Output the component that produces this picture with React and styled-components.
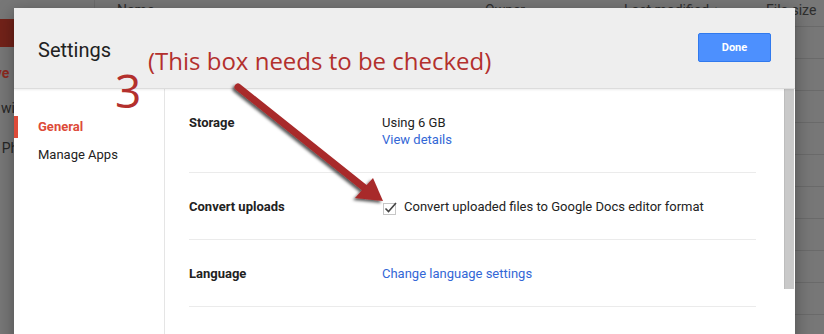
import React from "react";
import styled, { createGlobalStyle } from "styled-components";

const GlobalStyle = createGlobalStyle`
  html, body {
    margin: 0;
    padding: 0;
  }
  body {
    font-family: Roboto, "Liberation Sans", Arial, sans-serif;
    overflow: hidden;
  }
`;

const Page = styled.div`
  position: relative;
  width: 824px;
  height: 334px;
  overflow: hidden;
  background: #777777;
  display: flex;
`;

/* dimmed drive page behind the dialog */
const DriveNav = styled.div`
  flex-shrink: 0;
  width: 155px;
  margin-left: -60px;
  padding-top: 19px;
  box-sizing: border-box;
  border-right: 1px solid #6c6c6c;
`;

const NewButton = styled.div`
  margin-left: 14px;
  width: 88px;
  height: 28px;
  border-radius: 2px;
  background: #722219;
`;

const NavItem = styled.div`
  margin-top: ${props => props.gap}px;
  padding-left: 14px;
  font-size: 14px;
  line-height: 18px;
  white-space: nowrap;
  color: ${props => (props.active ? "#8c2a1f" : "#262626")};
  font-weight: ${props => (props.active ? 700 : 400)};
`;

const FileList = styled.div`
  flex: 1;
  display: flex;
  flex-direction: column;
`;

const ListHeader = styled.div`
  display: grid;
  grid-template-columns: 368px 139px 142px 1fr;
  height: 27px;
  padding: 1px 0 0 22px;
  box-sizing: border-box;
  border-bottom: 1px solid #6a6a6a;
  font-size: 14px;
  line-height: 18px;
  color: #2e2e2e;
  white-space: nowrap;
`;

const ListRow = styled.div`
  height: 31px;
  border-bottom: 1px solid #6a6a6a;
`;

/* settings dialog */
const Dialog = styled.div`
  position: absolute;
  left: 14px;
  top: 8px;
  z-index: 1;
  width: 781px;
  height: 420px;
  display: flex;
  flex-direction: column;
  background: #ffffff;
  box-shadow: 0 4px 16px rgba(0, 0, 0, 0.35);
`;

const Header = styled.div`
  flex-shrink: 0;
  height: 80px;
  display: flex;
  align-items: center;
  justify-content: space-between;
  padding: 0 24px;
  background: #eeeeee;
  border-bottom: 1px solid #dcdcdc;
  box-shadow: 0 1px 2px rgba(0, 0, 0, 0.08);
  position: relative;
`;

const Title = styled.h2`
  margin: 3px 0 0;
  font-size: 20px;
  font-weight: 400;
  color: #212121;
`;

const DoneButton = styled.button`
  width: 73px;
  height: 29px;
  margin-bottom: 2px;
  border: 1px solid #3079ed;
  border-radius: 2px;
  background: #4d90fe;
  color: #ffffff;
  font-family: Roboto, "Liberation Sans", Arial, sans-serif;
  font-size: 11px;
  font-weight: 700;
`;

const Body = styled.div`
  flex: 1;
  display: flex;
`;

const Sidebar = styled.nav`
  width: 150px;
  flex-shrink: 0;
  padding-top: 27px;
  border-right: 1px solid #e5e5e5;
`;

const SideItem = styled.div`
  margin-bottom: 6px;
  padding-left: ${props => (props.active ? 20 : 24)}px;
  border-left: ${props => (props.active ? "4px solid #dd4b39" : "none")};
  font-size: 13px;
  line-height: 22px;
  font-weight: ${props => (props.active ? 700 : 400)};
  color: ${props => (props.active ? "#dd4b39" : "#222222")};
`;

const Content = styled.div`
  flex: 1;
  padding: 0 28px 0 24px;
`;

const Row = styled.div`
  display: grid;
  grid-template-columns: 193px 1fr;
  padding: 25px 0 24px;
  border-bottom: 1px solid #ebebeb;
  font-size: 13px;
  line-height: 17px;
  color: #222222;
`;

const Label = styled.div`
  font-weight: 700;
`;

const Value = styled.div`
  display: flex;
  flex-direction: ${props => (props.inline ? "row" : "column")};
  align-items: ${props => (props.inline ? "center" : "flex-start")};
  gap: ${props => (props.inline ? "7px" : "0")};
`;

const LinkText = styled.a`
  color: #3367d6;
  text-decoration: none;
`;

const ScrollTrack = styled.div`
  width: 10px;
  margin-right: 1px;
  flex-shrink: 0;
`;

const ScrollThumb = styled.div`
  height: 200px;
  background: #c9c9c9;
  border-left: 1px solid #bdbdbd;
  box-sizing: border-box;
`;

/* annotation layer, drawn over the dialog */
const Note = styled.div`
  position: absolute;
  z-index: 2;
  left: 148px;
  top: 49px;
  font-family: "Open Sans", "DejaVu Sans", sans-serif;
  font-size: 24px;
  line-height: 1;
  color: #b3302d;
  white-space: nowrap;
`;

const StepNumber = styled.div`
  position: absolute;
  z-index: 2;
  left: 115px;
  top: 67px;
  font-family: "Open Sans", "DejaVu Sans", sans-serif;
  font-size: 46px;
  line-height: 1;
  color: #b3302d;
`;

const ArrowLayer = styled.svg`
  position: absolute;
  z-index: 2;
  left: 0;
  top: 0;
  pointer-events: none;
`;

const CheckIcon = () => (
  <svg width="15" height="16" viewBox="0 0 15 16">
    <rect x="1.5" y="4.5" width="12" height="11" fill="#fff" stroke="#c6c6c6" />
    <path d="M3.5 9.5 L6.5 12.5 L14 4" fill="none" stroke="#444" strokeWidth="1.6" />
  </svg>
);

const Arrow = () => (
  <ArrowLayer width="824" height="334" viewBox="0 0 824 334">
    <defs>
      <filter id="arrowShadow" x="-20%" y="-20%" width="140%" height="140%">
        <feDropShadow dx="-2" dy="2" stdDeviation="1.6" floodColor="#000" floodOpacity="0.65" />
      </filter>
    </defs>
    <g filter="url(#arrowShadow)" fill="#a8292a">
      <line x1="238" y1="87" x2="366" y2="189" stroke="#a8292a" strokeWidth="7" strokeLinecap="round" />
      <polygon points="373,178 383,201 355,198" />
    </g>
  </ArrowLayer>
);

const App = () => (
  <>
    <GlobalStyle />
    <Page>
      <DriveNav>
        <NewButton />
        <NavItem gap={17} active>
          My Drive
        </NavItem>
        <NavItem gap={17}>Shared with me</NavItem>
        <NavItem gap={22}>Google Photos</NavItem>
      </DriveNav>
      <FileList>
        <ListHeader>
          <span>Name</span>
          <span>Owner</span>
          <span>Last modified ↓</span>
          <span>File size</span>
        </ListHeader>
        {[0, 1, 2, 3, 4, 5, 6, 7, 8].map(i => (
          <ListRow key={i} />
        ))}
      </FileList>

      <Dialog>
        <Header>
          <Title>Settings</Title>
          <DoneButton>Done</DoneButton>
        </Header>
        <Body>
          <Sidebar>
            <SideItem active>General</SideItem>
            <SideItem>Manage Apps</SideItem>
          </Sidebar>
          <Content>
            <Row>
              <Label>Storage</Label>
              <Value>
                <span>Using 6 GB</span>
                <LinkText>View details</LinkText>
              </Value>
            </Row>
            <Row>
              <Label>Convert uploads</Label>
              <Value inline>
                <CheckIcon />
                <span>Convert uploaded files to Google Docs editor format</span>
              </Value>
            </Row>
            <Row>
              <Label>Language</Label>
              <Value>
                <LinkText>Change language settings</LinkText>
              </Value>
            </Row>
          </Content>
          <ScrollTrack>
            <ScrollThumb />
          </ScrollTrack>
        </Body>
      </Dialog>

      <Note>(This box needs to be checked)</Note>
      <StepNumber>3</StepNumber>
      <Arrow />
    </Page>
  </>
);

export default App;
